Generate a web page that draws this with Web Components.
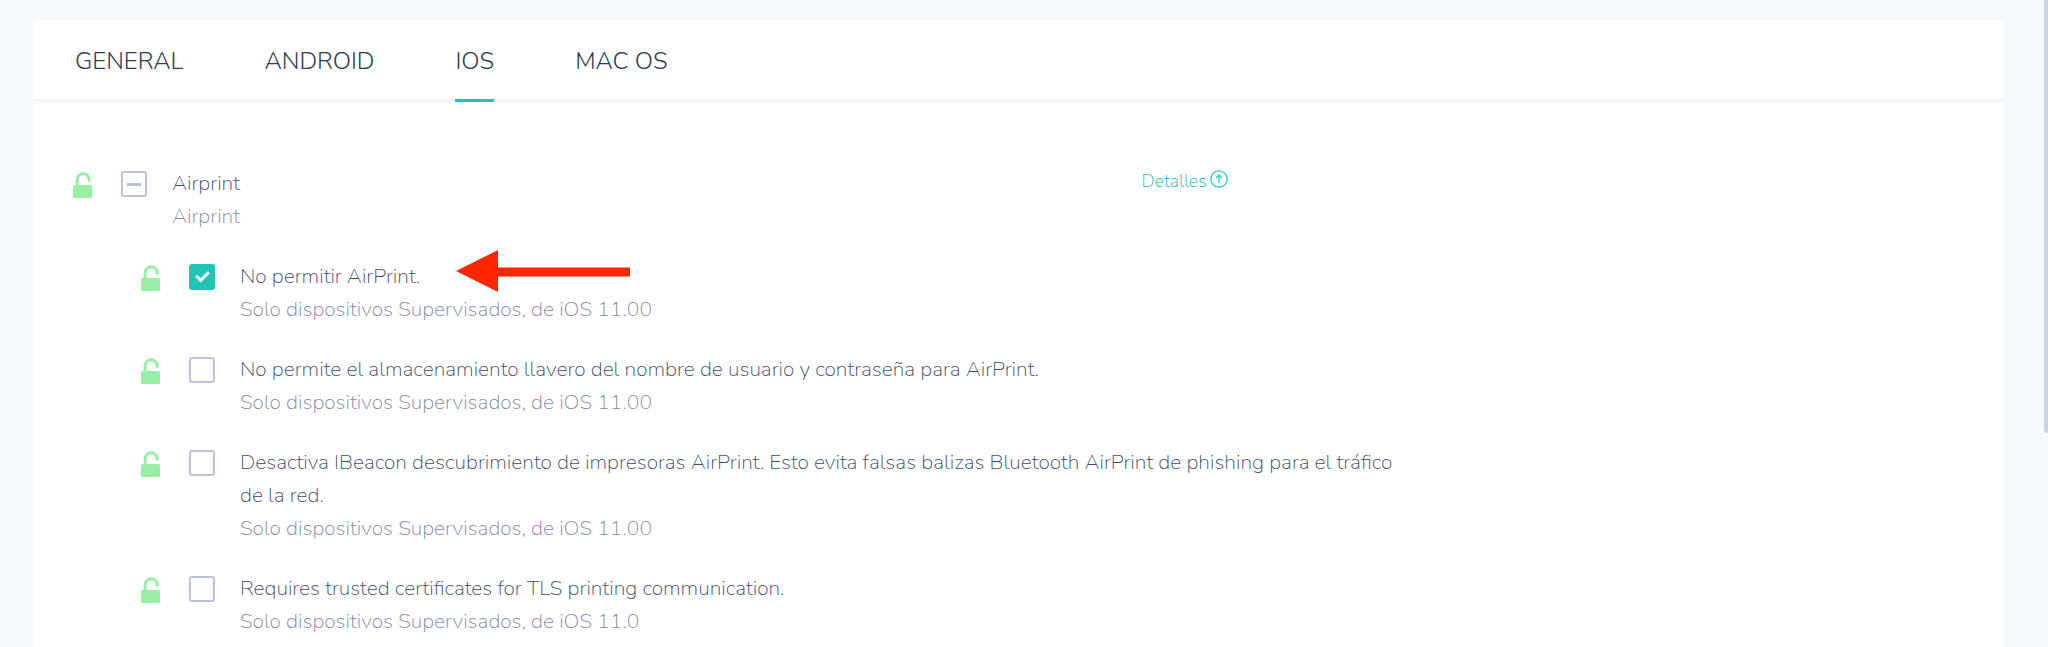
<!DOCTYPE html>
<html lang="es">
<head>
<meta charset="UTF-8">
<meta name="viewport" content="width=device-width, initial-scale=1.0">
<title>Airprint</title>
<style>
    body {
        margin: 0;
        background: #f6fafd;
        font-family: Nunito, "Open Sans", sans-serif;
        font-weight: 300;
        height: 100vh;
        overflow: hidden;
    }
</style>
</head>
<body>
<settings-page>
    <tab-bar slot="tabs">
        <tab-item>GENERAL</tab-item>
        <tab-item>ANDROID</tab-item>
        <tab-item active>IOS</tab-item>
        <tab-item>MAC OS</tab-item>
    </tab-bar>
    <policy-group>
        <policy-row slot="head" state="mixed">
            Airprint
            <span slot="note">Airprint</span>
        </policy-row>
        <details-link slot="link">Detalles</details-link>
        <policy-row state="checked">
            No permitir AirPrint.
            <span slot="note">Solo dispositivos Supervisados, de iOS 11.00</span>
            <red-arrow slot="mark"></red-arrow>
        </policy-row>
        <policy-row>
            No permite el almacenamiento llavero del nombre de usuario y contraseña para AirPrint.
            <span slot="note">Solo dispositivos Supervisados, de iOS 11.00</span>
        </policy-row>
        <policy-row>
            Desactiva IBeacon descubrimiento de impresoras AirPrint. Esto evita falsas balizas Bluetooth AirPrint de phishing para el tráfico de la red.
            <span slot="note">Solo dispositivos Supervisados, de iOS 11.00</span>
        </policy-row>
        <policy-row>
            Requires trusted certificates for TLS printing communication.
            <span slot="note">Solo dispositivos Supervisados, de iOS 11.0</span>
        </policy-row>
    </policy-group>
</settings-page>

<script>
    // small helper: open shadow root + markup
    class BaseElement extends HTMLElement {
        constructor() {
            super();
            this.attachShadow({ mode: "open" });
            this.shadowRoot.innerHTML = this.template();
        }
    }

    class SettingsPage extends BaseElement {
        template() {
            return `
            <style>
                :host {
                    display: block;
                    padding: 20px 44px 0 34px;
                }
                main {
                    background: #fff;
                    border-radius: 4px;
                    min-height: 100vh;
                }
                .content {
                    padding: 65px 38px;
                }
                /* scrollbar thumb, over the page's right edge */
                .thumb {
                    position: absolute;
                    top: 0;
                    right: 0;
                    width: 4px;
                    height: 67vh;
                    background: #cad2e8;
                    border-bottom-left-radius: 4px;
                }
            </style>
            <main>
                <slot name="tabs"></slot>
                <div class="content"><slot></slot></div>
            </main>
            <div class="thumb"></div>`;
        }
    }

    class TabBar extends BaseElement {
        template() {
            return `
            <style>
                :host {
                    display: block;
                }
                nav {
                    display: flex;
                    gap: 81px;
                    padding: 0 41px;
                    border-bottom: 3px solid #f5f5f5;
                }
            </style>
            <nav role="tablist"><slot></slot></nav>`;
        }
    }

    class TabItem extends BaseElement {
        template() {
            return `
            <style>
                :host {
                    display: block;
                    margin-bottom: -3px;
                }
                button {
                    display: block;
                    height: 82px;
                    padding: 2px 0 0;
                    border: 0;
                    border-bottom: 3px solid transparent;
                    background: none;
                    font: inherit;
                    font-size: 24px;
                    color: #2e3d54;
                    white-space: nowrap;
                    cursor: pointer;
                }
                :host([active]) button {
                    border-color: #20c5b8;
                }
            </style>
            <button role="tab"><slot></slot></button>`;
        }
        connectedCallback() {
            this.shadowRoot.querySelector("button").setAttribute("aria-selected", this.hasAttribute("active"));
        }
    }

    class PolicyGroup extends BaseElement {
        template() {
            return `
            <style>
                :host {
                    display: block;
                }
                .head {
                    display: grid;
                    grid-template-columns: 1069fr 824fr;
                    margin-bottom: 27px;
                }
                .children {
                    display: flex;
                    flex-direction: column;
                    gap: 27px;
                    width: 70%;
                    padding-left: 68px;
                    box-sizing: border-box;
                }
            </style>
            <div class="head">
                <slot name="head"></slot>
                <slot name="link"></slot>
            </div>
            <div class="children"><slot></slot></div>`;
        }
    }

    class PolicyRow extends BaseElement {
        template() {
            return `
            <style>
                :host {
                    display: flex;
                    align-items: flex-start;
                    font-size: 21px;
                    font-weight: 200;
                    line-height: 33px;
                    color: #3e4a6c;
                }
                lock-icon {
                    padding-top: 5px;
                    margin-right: 28px;
                }
                input {
                    appearance: none;
                    flex: none;
                    display: grid;
                    place-items: center;
                    width: 26px;
                    height: 26px;
                    margin: 4px 25px 0 0;
                    border: 2px solid #bcc3da;
                    border-radius: 3px;
                    background: #fff;
                }
                input:indeterminate::before {
                    content: "";
                    width: 14px;
                    height: 3px;
                    background: #b9c1d9;
                }
                input:checked {
                    border-color: #20c5b8;
                    background: #20c5b8;
                }
                input:checked::before {
                    content: "";
                    width: 10px;
                    height: 5px;
                    border: solid #e8f9f7;
                    border-width: 0 0 3px 3px;
                    transform: translateY(-2px) rotate(-45deg);
                }
                .text {
                    position: relative;
                }
                label {
                    display: block;
                }
                .note {
                    color: #7f88a8;
                }
                ::slotted([slot="mark"]) {
                    position: absolute;
                    top: -10px;
                    left: 216px;
                }
            </style>
            <lock-icon></lock-icon>
            <input type="checkbox" id="box">
            <div class="text">
                <label for="box"><slot></slot></label>
                <div class="note"><slot name="note"></slot></div>
                <slot name="mark"></slot>
            </div>`;
        }
        connectedCallback() {
            const box = this.shadowRoot.querySelector("#box");
            const state = this.getAttribute("state");
            box.checked = state === "checked";
            box.indeterminate = state === "mixed";
        }
    }

    class LockIcon extends BaseElement {
        template() {
            return `
            <style>
                :host {
                    display: block;
                    flex: none;
                    line-height: 0;
                    color: #98eea3;
                }
            </style>
            <svg width="21" height="27" viewBox="0 0 21 27" aria-hidden="true">
                <path d="M5.200 15V7.800a6 6 0 0 1 12 0V8.300" fill="none" stroke="currentColor" stroke-width="3" stroke-linecap="round"/>
                <rect x="1" y="13" width="19" height="13" rx="1.5" fill="currentColor"/>
            </svg>`;
        }
    }

    class DetailsLink extends BaseElement {
        template() {
            return `
            <style>
                :host {
                    display: block;
                    font-size: 18px;
                    font-weight: 200;
                    line-height: 28px;
                }
                a {
                    display: inline-flex;
                    gap: 3px;
                    color: #12b8ab;
                    text-decoration: none;
                }
                svg {
                    margin-top: 3px;
                }
            </style>
            <a href="#">
                <slot></slot>
                <svg width="18" height="18" viewBox="0 0 18 18" fill="none" stroke="#35cabf" stroke-width="1.3" aria-hidden="true">
                    <circle cx="9" cy="9" r="8.2"/>
                    <path d="M9 13.2V5.2M6 8l3-3 3 3"/>
                </svg>
            </a>`;
        }
    }

    class RedArrow extends BaseElement {
        template() {
            return `
            <style>
                :host {
                    display: block;
                    line-height: 0;
                }
            </style>
            <svg width="174" height="42" viewBox="0 0 174 42" fill="#ff2600" aria-hidden="true">
                <path d="M0 21L42 0v17.500h132v9H42V42z"/>
            </svg>`;
        }
    }

    customElements.define("lock-icon", LockIcon);
    customElements.define("red-arrow", RedArrow);
    customElements.define("details-link", DetailsLink);
    customElements.define("policy-row", PolicyRow);
    customElements.define("policy-group", PolicyGroup);
    customElements.define("tab-item", TabItem);
    customElements.define("tab-bar", TabBar);
    customElements.define("settings-page", SettingsPage);
</script>
</body>
</html>
